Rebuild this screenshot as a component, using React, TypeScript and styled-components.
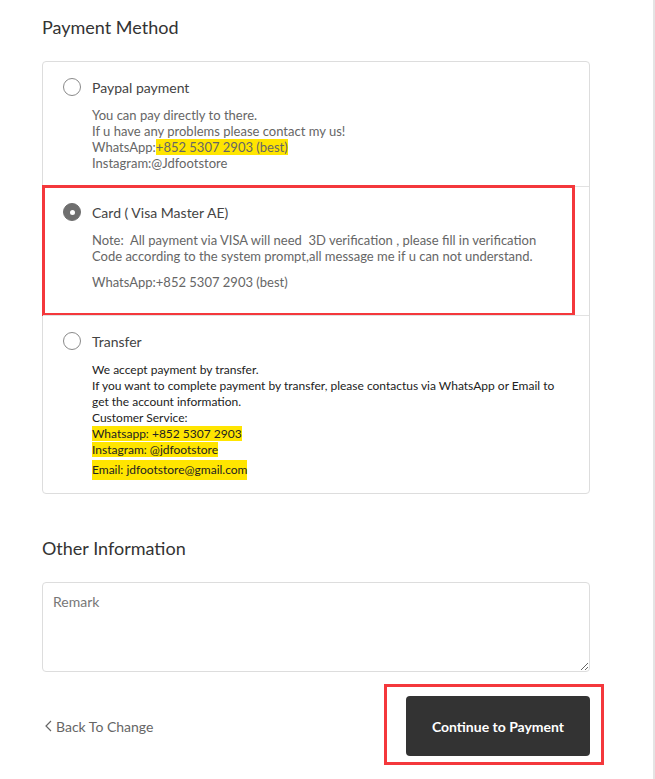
import React from "react";
import styled, { createGlobalStyle } from "styled-components";

const GlobalStyle = createGlobalStyle`
  html, body {
    margin: 0;
    padding: 0;
    background: #fff;
  }
  body {
    font-family: "Lato", "Liberation Sans", sans-serif;
    color: #333;
  }
  * {
    box-sizing: border-box;
  }
`;

const ANNOTATION_RED = "#f4383c";

const Page = styled.div`
  width: 655px;
  min-height: 779px;
  border-right: 2px solid #e4e4e4;
  padding: 15px 0 0 42px;
`;

const Column = styled.div`
  width: 548px;
  display: flex;
  flex-direction: column;
`;

const SectionTitle = styled.h2<{ spaced?: boolean }>`
  margin: ${(p) => (p.spaced ? "42px" : "0")} 0 0;
  font-size: 18px;
  font-weight: 400;
  line-height: 24px;
  color: #333;
`;

const MethodList = styled.div`
  margin-top: 22px;
  border: 1px solid #ddd;
  border-radius: 4px;
  display: flex;
  flex-direction: column;
`;

const MethodRow = styled.div<{ highlighted?: boolean; extraBottom?: number }>`
  position: relative;
  padding: 15px 20px ${(p) => 14 + (p.extraBottom || 0)}px 20px;
  border-top: 1px solid #e2e2e2;
  &:first-child {
    border-top: none;
    padding-bottom: 15px;
  }
  ${(p) =>
    p.highlighted &&
    `
    &::after {
      content: "";
      position: absolute;
      left: -1px;
      right: 14px;
      top: -2px;
      bottom: -1px;
      border: 3px solid ${ANNOTATION_RED};
      pointer-events: none;
    }
  `}
`;

const MethodHeader = styled.label`
  display: flex;
  align-items: center;
  gap: 11px;
  height: 20px;
  cursor: pointer;
`;

const Radio = styled.span<{ checked?: boolean }>`
  width: 18px;
  height: 18px;
  border-radius: 50%;
  flex-shrink: 0;
  display: flex;
  align-items: center;
  justify-content: center;
  border: 1.5px solid ${(p) => (p.checked ? "#6f6f6f" : "#8a8a8a")};
  background: ${(p) => (p.checked ? "#6f6f6f" : "#fff")};
  &::before {
    content: "";
    width: 5px;
    height: 5px;
    border-radius: 50%;
    background: #fff;
    display: ${(p) => (p.checked ? "block" : "none")};
  }
`;

const MethodName = styled.span`
  font-size: 14px;
  color: #444;
`;

const MethodBody = styled.div<{ dark?: boolean }>`
  margin: ${(p) => (p.dark ? "11px" : "10px")} 0 0 29px;
  font-size: ${(p) => (p.dark ? "12px" : "13px")};
  line-height: 16px;
  color: ${(p) => (p.dark ? "#222" : "#666")};
  p {
    margin: 0;
  }
  p + p {
    margin-top: 10px;
  }
`;

const Mark = styled.span<{ tall?: boolean }>`
  background: #ffe500;
  ${(p) => p.tall && "display: inline-block; line-height: 20px; margin-top: 2px;"}
`;

const Remark = styled.textarea`
  margin-top: 22px;
  width: 100%;
  height: 90px;
  border: 1px solid #ddd;
  border-radius: 4px;
  padding: 10px 10px;
  font-family: inherit;
  font-size: 14px;
  color: #333;
  resize: vertical;
  outline: none;
  &::placeholder {
    color: #777;
  }
`;

const Footer = styled.div`
  margin-top: 24px;
  display: flex;
  align-items: center;
  justify-content: space-between;
`;

const BackLink = styled.a`
  display: flex;
  align-items: center;
  gap: 3px;
  padding-left: 2px;
  font-size: 14px;
  color: #666;
  text-decoration: none;
  cursor: pointer;
  svg {
    width: 9px;
    height: 12px;
  }
`;

const ContinueButton = styled.button`
  position: relative;
  width: 184px;
  height: 60px;
  border: none;
  border-radius: 4px;
  background: #333;
  color: #fff;
  font-family: inherit;
  font-size: 14px;
  font-weight: 700;
  cursor: pointer;
  &::after {
    content: "";
    position: absolute;
    left: -22px;
    right: -14px;
    top: -12px;
    bottom: -9px;
    border: 3px solid ${ANNOTATION_RED};
    pointer-events: none;
  }
`;

export default function App() {
  return (
    <>
      <GlobalStyle />
      <Page>
        <Column>
          <SectionTitle>Payment Method</SectionTitle>
          <MethodList>
            <MethodRow>
              <MethodHeader>
                <Radio />
                <MethodName>Paypal payment</MethodName>
              </MethodHeader>
              <MethodBody>
                You can pay directly to there.
                <br />
                If u have any problems please contact my us!
                <br />
                WhatsApp:<Mark>+852 5307 2903 (best)</Mark>
                <br />
                Instagram:@Jdfootstore
              </MethodBody>
            </MethodRow>
            <MethodRow highlighted extraBottom={11}>
              <MethodHeader>
                <Radio checked />
                <MethodName>Card ( Visa Master AE)</MethodName>
              </MethodHeader>
              <MethodBody>
                <p>
                  Note:&nbsp; All payment via VISA will need&nbsp; 3D verification , please fill in
                  verification Code according to the system prompt,all message me if u can not
                  understand.
                </p>
                <p>WhatsApp:+852 5307 2903 (best)</p>
              </MethodBody>
            </MethodRow>
            <MethodRow extraBottom={-1}>
              <MethodHeader>
                <Radio />
                <MethodName>Transfer</MethodName>
              </MethodHeader>
              <MethodBody dark>
                We accept payment by transfer.
                <br />
                If you want to complete payment by transfer, please contactus via WhatsApp or Email to
                get the account information.
                <br />
                Customer Service:
                <br />
                <Mark>Whatsapp: +852 5307 2903</Mark>
                <br />
                <Mark>Instagram: @jdfootstore</Mark>
                <br />
                <Mark tall>Email: jdfootstore@gmail.com</Mark>
              </MethodBody>
            </MethodRow>
          </MethodList>

          <SectionTitle spaced>Other Information</SectionTitle>
          <Remark placeholder="Remark" />

          <Footer>
            <BackLink>
              <svg viewBox="0 0 9 12" fill="none" stroke="#666" strokeWidth="1.2">
                <path d="M7 1 L2 6 L7 11" />
              </svg>
              Back To Change
            </BackLink>
            <ContinueButton>Continue to Payment</ContinueButton>
          </Footer>
        </Column>
      </Page>
    </>
  );
}
